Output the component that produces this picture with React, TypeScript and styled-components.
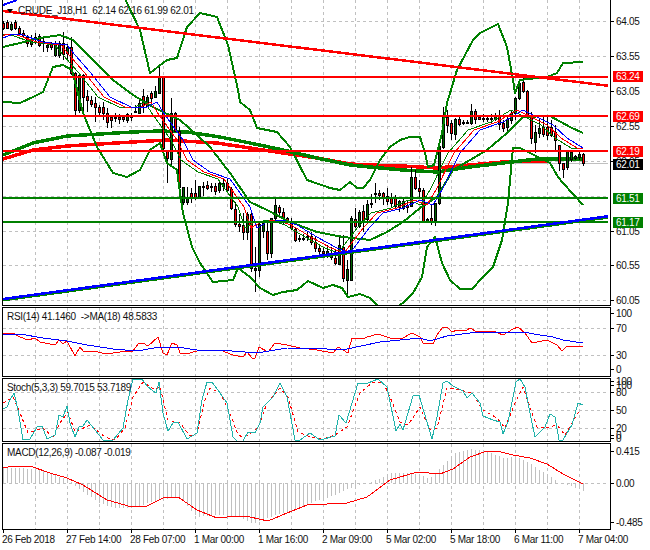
import React from 'react';
import styled, { createGlobalStyle } from 'styled-components';

type Pt = [number, number];
type Candle = [number, number, number, number, 'u' | 'd'];

const RED = '#ff0000';
const GREEN = '#008000';
const BLUE = '#0000ff';
const GRID = '#c0c0c0';
const BARS = 146;
const PLOT_W = 607;

// high, body top, body bottom, low, direction - all in page pixels
const CANDLES: Candle[] = [
  [21, 23, 28, 30, 'd'], [20, 22, 28, 29, 'd'], [22, 24, 29, 31, 'u'], [20, 22, 28, 30, 'd'],
  [26, 28, 33, 36, 'd'], [30, 33, 35, 38, 'd'], [35, 37, 43, 47, 'd'], [35, 39, 44, 47, 'u'],
  [33, 37, 38, 44, 'd'], [34, 36, 45, 47, 'd'], [38, 41, 43, 52, 'd'], [42, 45, 47, 52, 'u'],
  [42, 44, 47, 50, 'd'], [41, 43, 55, 57, 'u'], [41, 43, 55, 58, 'u'], [32, 43, 54, 60, 'd'],
  [44, 47, 53, 60, 'u'], [37, 47, 73, 75, 'd'], [72, 73, 110, 115, 'd'], [74, 75, 110, 113, 'u'],
  [74, 75, 97, 112, 'd'], [90, 96, 100, 112, 'd'], [96, 100, 104, 107, 'd'], [97, 103, 107, 122, 'd'],
  [105, 107, 112, 115, 'd'], [102, 107, 113, 120, 'd'], [108, 113, 122, 128, 'd'], [115, 117, 120, 128, 'd'],
  [113, 117, 118, 122, 'd'], [114, 117, 119, 124, 'd'], [115, 117, 119, 122, 'd'], [113, 114, 120, 123, 'u'],
  [113, 115, 117, 121, 'd'], [105, 111, 112, 113, 'u'], [100, 103, 113, 114, 'u'], [89, 96, 105, 113, 'd'],
  [95, 97, 106, 107, 'u'], [91, 93, 98, 107, 'd'], [86, 91, 97, 98, 'u'], [66, 77, 93, 94, 'u'],
  [76, 77, 148, 150, 'd'], [150, 150, 158, 183, 'd'], [98, 113, 159, 166, 'u'], [112, 113, 131, 132, 'd'],
  [127, 131, 187, 195, 'd'], [187, 187, 202, 205, 'u'], [187, 197, 202, 205, 'u'], [188, 193, 197, 203, 'd'],
  [180, 193, 197, 200, 'd'], [186, 186, 198, 199, 'u'], [182, 186, 187, 196, 'u'], [181, 185, 188, 190, 'd'],
  [183, 186, 187, 192, 'u'], [183, 186, 191, 195, 'd'], [180, 183, 190, 193, 'u'], [178, 183, 186, 191, 'u'],
  [178, 183, 190, 192, 'd'], [187, 189, 208, 210, 'd'], [202, 209, 224, 227, 'd'], [214, 224, 226, 232, 'd'],
  [213, 225, 232, 240, 'd'], [212, 214, 232, 240, 'u'], [211, 214, 268, 272, 'd'], [247, 268, 270, 292, 'u'],
  [223, 224, 270, 277, 'u'], [222, 223, 231, 238, 'u'], [223, 231, 253, 260, 'd'], [218, 218, 253, 258, 'u'],
  [197, 205, 218, 222, 'u'], [205, 207, 212, 218, 'd'], [208, 212, 218, 225, 'd'], [217, 218, 222, 223, 'd'],
  [218, 221, 228, 230, 'd'], [228, 229, 240, 242, 'd'], [235, 238, 239, 242, 'd'], [234, 238, 239, 241, 'u'],
  [232, 236, 237, 241, 'u'], [232, 236, 242, 245, 'd'], [236, 242, 248, 252, 'd'], [245, 248, 251, 255, 'd'],
  [248, 251, 253, 256, 'd'], [245, 251, 256, 258, 'u'], [247, 253, 257, 260, 'u'], [250, 258, 263, 265, 'd'],
  [236, 245, 264, 265, 'u'], [235, 247, 278, 282, 'd'], [260, 269, 280, 296, 'u'], [216, 218, 280, 281, 'u'],
  [208, 219, 226, 228, 'd'], [210, 212, 226, 228, 'u'], [205, 211, 220, 232, 'd'], [200, 204, 219, 222, 'u'],
  [194, 203, 204, 208, 'd'], [183, 193, 194, 203, 'u'], [190, 193, 195, 200, 'd'], [192, 193, 197, 205, 'd'],
  [188, 196, 201, 205, 'd'], [193, 198, 203, 207, 'd'], [195, 198, 206, 208, 'd'], [200, 201, 207, 212, 'u'],
  [198, 201, 208, 210, 'u'], [200, 205, 207, 213, 'd'], [167, 177, 206, 207, 'u'], [170, 177, 188, 190, 'd'],
  [180, 188, 191, 198, 'd'], [188, 190, 221, 223, 'd'], [218, 219, 221, 223, 'u'], [205, 218, 221, 225, 'd'],
  [203, 203, 220, 226, 'u'], [140, 146, 203, 205, 'u'], [107, 116, 147, 149, 'u'], [110, 117, 125, 133, 'd'],
  [120, 123, 133, 140, 'd'], [118, 119, 134, 140, 'u'], [117, 119, 124, 126, 'd'], [120, 122, 123, 125, 'u'],
  [120, 122, 123, 124, 'd'], [104, 111, 123, 125, 'u'], [109, 111, 119, 124, 'd'], [115, 117, 119, 120, 'd'],
  [114, 118, 119, 122, 'u'], [115, 118, 119, 122, 'd'], [114, 118, 119, 123, 'u'], [113, 116, 119, 121, 'u'],
  [110, 115, 124, 130, 'd'], [120, 123, 128, 132, 'd'], [115, 119, 127, 131, 'u'], [111, 113, 120, 124, 'u'],
  [97, 98, 113, 120, 'u'], [82, 83, 98, 100, 'u'], [76, 82, 91, 93, 'd'], [90, 91, 117, 119, 'd'],
  [112, 117, 138, 144, 'd'], [125, 132, 142, 153, 'u'], [118, 128, 133, 138, 'u'], [115, 127, 134, 137, 'd'],
  [117, 127, 135, 140, 'd'], [120, 127, 135, 137, 'd'], [125, 132, 140, 150, 'd'], [145, 145, 163, 171, 'd'],
  [163, 163, 169, 178, 'd'], [150, 151, 167, 170, 'u'], [150, 152, 159, 162, 'u'], [155, 156, 158, 160, 'u'],
  [152, 154, 157, 160, 'u'], [153, 154, 163, 166, 'd'],
];

const SLOW_RED: Pt[] = [[3, 159], [33, 150], [67, 146], [100, 144], [133, 142], [167, 140], [183, 141], [217, 143], [250, 148], [283, 153], [317, 158], [350, 164], [370, 165], [403, 166], [437, 168], [470, 165], [503, 162], [547, 161]];
const SLOW_GREEN: Pt[] = [[3, 155], [33, 143], [67, 136], [100, 134], [133, 132], [160, 131], [187, 132], [220, 137], [250, 143], [283, 150], [317, 158], [350, 165], [370, 167], [403, 170], [437, 172], [470, 167], [503, 163], [537, 159], [583, 159]];

const BB_UPPER: Pt[] = [[120, -10], [127, 3], [140, 30], [150, 73], [167, 60], [177, 58], [187, 27], [200, 13], [217, 17], [228, 45], [238, 90], [240, 102], [250, 110], [257, 128], [277, 132], [290, 147], [307, 180], [330, 188], [340, 190], [350, 182], [357, 188], [363, 188], [370, 180], [380, 160], [390, 147], [400, 140], [410, 137], [420, 137], [425, 153], [428, 167], [434, 165], [442, 133], [447, 103], [457, 70], [473, 40], [480, 33], [498, 24], [507, 47], [513, 80], [515, 93], [520, 80], [547, 77], [557, 73], [563, 63], [583, 62]];
const BB_MID: Pt[] = [[3, 47], [20, 43], [40, 38], [60, 35], [73, 40], [93, 60], [113, 80], [133, 95], [153, 107], [163, 112], [180, 120], [197, 135], [210, 147], [230, 173], [250, 202], [267, 210], [290, 222], [317, 232], [343, 237], [370, 240], [387, 232], [403, 222], [420, 208], [437, 197], [453, 170], [487, 150], [507, 133], [523, 117], [550, 116], [570, 127], [583, 133]];
const BB_LOWER: Pt[] = [[3, 102], [20, 103], [33, 97], [43, 92], [53, 67], [63, 65], [72, 70], [83, 113], [97, 147], [113, 173], [127, 177], [140, 170], [150, 150], [160, 143], [167, 163], [177, 170], [180, 193], [183, 213], [192, 247], [200, 263], [213, 282], [233, 280], [238, 268], [250, 277], [260, 288], [273, 295], [283, 292], [297, 290], [308, 281], [323, 288], [333, 285], [342, 288], [348, 297], [360, 294], [370, 298], [378, 306], [398, 306], [403, 303], [413, 293], [422, 277], [427, 247], [435, 237], [442, 263], [450, 280], [460, 289], [472, 289], [483, 277], [493, 267], [502, 240], [508, 203], [513, 148], [520, 148], [530, 153], [550, 163], [558, 177], [563, 183], [583, 205]];

const MA_BLUE: Pt[] = [[3, 38], [13, 34], [23, 35], [43, 42], [67, 45], [75, 55], [90, 72], [110, 97], [133, 108], [147, 107], [157, 102], [163, 112], [183, 140], [193, 160], [210, 172], [230, 179], [250, 207], [257, 228], [267, 222], [283, 220], [297, 225], [317, 237], [337, 248], [350, 253], [370, 227], [383, 213], [403, 208], [420, 200], [433, 205], [442, 190], [460, 153], [480, 130], [503, 122], [523, 110], [537, 117], [553, 125], [567, 138], [583, 148]];
const shifted = (pts: Pt[], dx: number, dy: number): Pt[] => [
  ...pts.map(([x, y]): Pt => [x - dx, y + dy]),
  [583, pts[pts.length - 1][1] + dy],
];

const RSI_LINE: Pt[] = [[3, 334], [13, 333], [20, 337], [28, 340], [35, 338], [40, 342], [55, 345], [59, 340], [63, 344], [67, 341], [75, 356], [80, 347], [83, 351], [93, 351], [107, 354], [120, 352], [133, 351], [138, 344], [143, 343], [148, 346], [158, 337], [163, 353], [167, 355], [172, 343], [177, 345], [180, 353], [190, 353], [200, 350], [220, 350], [233, 355], [243, 357], [247, 352], [252, 358], [255, 358], [259, 347], [268, 352], [275, 343], [287, 345], [300, 348], [317, 350], [333, 353], [338, 347], [348, 353], [352, 338], [363, 339], [367, 337], [378, 334], [390, 338], [403, 338], [412, 333], [420, 337], [423, 343], [433, 344], [437, 335], [442, 328], [447, 327], [452, 332], [457, 330], [467, 330], [470, 328], [477, 332], [493, 331], [503, 335], [513, 329], [518, 327], [525, 333], [532, 343], [537, 342], [547, 340], [557, 345], [562, 351], [567, 346], [580, 346], [583, 347]];
const RSI_MA: Pt[] = [[3, 334], [20, 334], [43, 338], [67, 341], [87, 345], [113, 349], [137, 351], [160, 347], [177, 347], [197, 350], [220, 350], [257, 353], [287, 348], [327, 349], [347, 349], [380, 342], [420, 338], [430, 341], [447, 336], [470, 333], [483, 332], [523, 332], [540, 335], [553, 337], [563, 340], [583, 343]];

const STOCH_MAIN: Pt[] = [[3, 409], [7, 407], [10, 400], [14, 393], [18, 410], [23, 440], [30, 439], [37, 427], [42, 426], [47, 439], [55, 435], [59, 415], [63, 417], [67, 406], [70, 423], [75, 437], [79, 427], [83, 426], [87, 420], [103, 440], [113, 440], [123, 428], [128, 400], [133, 379], [142, 379], [148, 387], [156, 393], [159, 382], [163, 413], [168, 431], [173, 423], [178, 422], [187, 439], [197, 433], [202, 400], [207, 382], [212, 382], [220, 393], [227, 403], [233, 437], [237, 441], [243, 441], [248, 432], [255, 433], [260, 423], [263, 407], [273, 397], [280, 383], [287, 397], [295, 440], [300, 440], [310, 433], [320, 440], [335, 436], [339, 415], [346, 423], [358, 383], [368, 383], [378, 379], [387, 387], [396, 431], [400, 424], [403, 430], [413, 396], [419, 395], [432, 439], [437, 417], [443, 383], [447, 381], [453, 386], [463, 391], [467, 398], [472, 393], [480, 403], [483, 416], [493, 420], [500, 422], [503, 434], [508, 422], [516, 382], [520, 379], [525, 387], [530, 413], [535, 437], [545, 427], [550, 414], [555, 417], [559, 440], [563, 440], [572, 425], [578, 403], [583, 405]];
const STOCH_SIGNAL: Pt[] = [[3, 403], [13, 397], [20, 413], [28, 433], [43, 428], [53, 437], [60, 423], [68, 412], [75, 432], [90, 425], [105, 437], [115, 440], [125, 428], [133, 397], [143, 382], [155, 390], [160, 387], [168, 420], [180, 423], [190, 436], [197, 433], [205, 400], [210, 388], [220, 393], [230, 413], [238, 435], [243, 437], [248, 435], [258, 428], [267, 403], [280, 388], [288, 397], [298, 432], [310, 437], [323, 439], [335, 435], [347, 427], [360, 393], [373, 382], [383, 382], [390, 397], [400, 422], [408, 425], [420, 407], [430, 430], [437, 428], [447, 388], [460, 390], [472, 393], [483, 410], [497, 418], [505, 428], [515, 403], [523, 387], [537, 427], [545, 428], [557, 425], [565, 435], [580, 410]];

const MACD_HIST: Pt[] = [[3, 468], [23, 468], [43, 471], [55, 475], [67, 479], [72, 482], [75, 486], [100, 503], [113, 508], [131, 508], [160, 500], [180, 497], [197, 517], [220, 515], [240, 517], [253, 524], [267, 518], [287, 512], [310, 503], [330, 497], [353, 487], [367, 483], [377, 480], [390, 473], [407, 473], [420, 475], [430, 479], [443, 465], [455, 453], [472, 449], [490, 452], [503, 458], [517, 457], [530, 463], [543, 472], [552, 477], [560, 483], [567, 485], [577, 488], [583, 491]];
const MACD_SIGNAL: Pt[] = [[3, 468], [13, 466], [30, 466], [50, 473], [67, 478], [83, 485], [107, 500], [132, 507], [147, 506], [163, 498], [178, 497], [197, 510], [217, 518], [237, 516], [250, 517], [268, 521], [287, 513], [307, 505], [347, 503], [367, 497], [390, 480], [417, 472], [440, 474], [453, 469], [470, 457], [487, 451], [497, 451], [513, 455], [530, 458], [547, 464], [563, 474], [583, 484]];

const TIME_LABELS = ['26 Feb 2018', '27 Feb 14:00', '28 Feb 07:00', '1 Mar 00:00', '1 Mar 16:00', '2 Mar 09:00', '5 Mar 02:00', '5 Mar 18:00', '6 Mar 11:00', '7 Mar 04:00'];

const toPoints = (pts: Pt[]) => pts.map(([x, y]) => `${x},${y}`).join(' ');

const interp = (pts: Pt[], x: number) => {
  for (let i = 1; i < pts.length; i++) {
    if (x <= pts[i][0]) {
      const [x0, y0] = pts[i - 1];
      const [x1, y1] = pts[i];
      return y0 + ((y1 - y0) * (x - x0)) / (x1 - x0);
    }
  }
  return pts[pts.length - 1][1];
};

const GlobalStyle = createGlobalStyle`
  html, body {
    margin: 0;
    padding: 0;
    width: 650px;
    height: 550px;
    overflow: hidden;
    background: #ffffff;
  }
`;

const Chart = styled.div`
  display: flex;
  flex-direction: column;
  gap: 1px;
  width: 650px;
  height: 550px;
  padding-left: 2px;
  box-sizing: border-box;
  font-family: 'Liberation Sans', Arial, sans-serif;
  font-size: 10px;
  letter-spacing: -0.3px;
  color: #111;
`;

const Pane = styled.section<{ $height: number }>`
  display: flex;
  height: ${(p) => p.$height}px;
`;

const Plot = styled.div<{ $open?: boolean }>`
  position: relative;
  width: ${PLOT_W}px;
  border: 1px solid #000;
  border-top-width: ${(p) => (p.$open ? 0 : 1)}px;
  overflow: hidden;
  svg {
    display: block;
  }
`;

const PaneLabel = styled.div`
  position: absolute;
  left: 4px;
  top: 3px;
  white-space: pre;
  line-height: 12px;
`;

const SymbolLabel = styled(PaneLabel)`
  left: 14px;
  top: 5px;
  display: flex;
  align-items: center;
  gap: 5px;
  &::before {
    content: '';
    width: 0;
    height: 0;
    margin-left: -10px;
    border-left: 3.5px solid transparent;
    border-right: 3.5px solid transparent;
    border-top: 4px solid #000;
  }
`;

const Axis = styled.div`
  position: relative;
  flex: 1;
`;

const AxisTick = styled.span`
  position: absolute;
  left: 5px;
  line-height: 12px;
  margin-top: -5px;
  &::before {
    content: '';
    position: absolute;
    left: -5px;
    top: 5px;
    width: 3px;
    height: 1px;
    background: #000;
  }
`;

const PriceTag = styled.span<{ $bg: string }>`
  position: absolute;
  left: 2px;
  width: 30px;
  height: 11px;
  margin-top: -5.5px;
  padding-left: 3px;
  box-sizing: border-box;
  line-height: 11px;
  color: #fff;
  background: ${(p) => p.$bg};
`;

const TimeAxis = styled.div`
  display: grid;
  grid-template-columns: repeat(10, 64px);
  margin-top: -1px;
`;

const TimeCell = styled.span`
  position: relative;
  padding-top: 4px;
  line-height: 12px;
  white-space: nowrap;
  &::before {
    content: '';
    position: absolute;
    left: 1px;
    top: 0;
    width: 1px;
    height: 3px;
    background: #000;
  }
`;

const Curve = styled.polyline<{ $color: string; $w: number; $dash?: string }>`
  fill: none;
  stroke: ${(p) => p.$color};
  stroke-width: ${(p) => p.$w}px;
  stroke-dasharray: ${(p) => p.$dash ?? 'none'};
  stroke-linejoin: round;
`;

const Rule = styled.line<{ $color: string; $w?: number; $dash?: string }>`
  stroke: ${(p) => p.$color};
  stroke-width: ${(p) => p.$w ?? 1}px;
  stroke-dasharray: ${(p) => p.$dash ?? 'none'};
`;

const Wick = styled.line`
  stroke: #000;
  stroke-width: 1px;
`;

const Body = styled.rect<{ $up: boolean }>`
  fill: ${(p) => (p.$up ? '#006400' : RED)};
  stroke: #000;
  stroke-width: 1px;
`;

const Grid = ({ top, height, rows }: { top: number; height: number; rows: number[] }) => (
  <g shapeRendering="crispEdges">
    {Array.from({ length: 19 }, (_, k) => 35.5 + 32 * k).map((x) => (
      <Rule key={x} x1={x} x2={x} y1={top} y2={top + height} $color={GRID} $dash="3 3" />
    ))}
    {rows.map((y) => (
      <Rule key={y} x1={3} x2={610} y1={y + 0.5} y2={y + 0.5} $color={GRID} $dash="3 3" />
    ))}
  </g>
);

const PaneSvg = ({ top, height, children }: { top: number; height: number; children: React.ReactNode }) => (
  <svg width={PLOT_W - 2} height={height} viewBox={`3 ${top} ${PLOT_W - 2} ${height}`}>
    {children}
  </svg>
);

const Candles = () => (
  <g shapeRendering="crispEdges">
    {CANDLES.map(([high, bodyTop, bodyBottom, low, dir], i) => {
      const x = 3.5 + 4 * i;
      return (
        <g key={i}>
          <Wick x1={x} x2={x} y1={high} y2={low} />
          <Body
            $up={dir === 'u'}
            x={x - 1}
            y={bodyTop + 0.5}
            width={2}
            height={Math.max(bodyBottom - bodyTop, 1)}
          />
        </g>
      );
    })}
  </g>
);

const MainPane = () => (
  <Pane $height={306}>
    <Plot $open>
      <PaneSvg top={0} height={305}>
        <Grid top={0} height={305} rows={[21, 56, 91, 126, 161, 196, 231, 265, 300]} />
        <Rule x1={3} x2={610} y1={163.5} y2={163.5} $color={GRID} shapeRendering="crispEdges" />
        <g shapeRendering="crispEdges">
          <Curve points={toPoints(SLOW_RED)} $color={RED} $w={3.5} />
          <Curve points={toPoints(SLOW_GREEN)} $color={GREEN} $w={3.5} />
        </g>
        <Candles />
        <g shapeRendering="crispEdges">
          <Curve points={toPoints(BB_UPPER)} $color={GREEN} $w={2} />
          <Curve points={toPoints(BB_MID)} $color={GREEN} $w={2} />
          <Curve points={toPoints(BB_LOWER)} $color={GREEN} $w={2} />
          <Curve points={toPoints(shifted(MA_BLUE, 12, 0))} $color={GREEN} $w={1} />
          <Curve points={toPoints(shifted(MA_BLUE, 6, 0))} $color={RED} $w={1} />
          <Curve points={toPoints(MA_BLUE)} $color={BLUE} $w={1} />
          {[77, 116, 151].map((y) => (
            <Rule key={y} x1={3} x2={610} y1={y} y2={y} $color={RED} $w={2} />
          ))}
          {[198, 222].map((y) => (
            <Rule key={y} x1={3} x2={610} y1={y} y2={y} $color={GREEN} $w={2} />
          ))}
          <Rule x1={3} x2={610} y1={11} y2={86} $color={RED} $w={2.5} />
          <Rule x1={3} x2={610} y1={300.5} y2={217.5} $color={GREEN} $w={2} />
          <Rule x1={3} x2={610} y1={299} y2={216} $color={BLUE} $w={2.5} />
          <Rule x1={3} x2={17} y1={5} y2={0} $color={BLUE} $w={2} />
        </g>
      </PaneSvg>
      <SymbolLabel>CRUDE_J18,H1  62.14 62.16 61.99 62.01</SymbolLabel>
    </Plot>
    <Axis>
      {[21, 56, 91, 126, 161, 231, 265, 300].map((y, i) => (
        <AxisTick key={y} style={{ top: y }}>
          {['64.05', '63.55', '63.05', '62.55', '62.05', '61.05', '60.55', '60.05'][i]}
        </AxisTick>
      ))}
      <PriceTag $bg={RED} style={{ top: 76.5 }}>63.24</PriceTag>
      <PriceTag $bg={RED} style={{ top: 116 }}>62.69</PriceTag>
      <PriceTag $bg={RED} style={{ top: 151 }}>62.19</PriceTag>
      <PriceTag $bg="#000" style={{ top: 164 }}>62.01</PriceTag>
      <PriceTag $bg={GREEN} style={{ top: 198 }}>61.51</PriceTag>
      <PriceTag $bg={GREEN} style={{ top: 222 }}>61.17</PriceTag>
    </Axis>
  </Pane>
);

const IndicatorAxis = ({ top, ticks }: { top: number; ticks: [string, number][] }) => (
  <Axis>
    {ticks.map(([label, y]) => (
      <AxisTick key={label + y} style={{ top: y - top }}>
        {label}
      </AxisTick>
    ))}
  </Axis>
);

export default function App() {
  return (
    <>
      <GlobalStyle />
      <Chart>
        <MainPane />

        <Pane $height={70}>
          <Plot>
            <PaneSvg top={308} height={68}>
              <Grid top={308} height={68} rows={[328, 355]} />
              <g shapeRendering="crispEdges">
                <Curve points={toPoints(RSI_LINE)} $color={RED} $w={1} />
                <Curve points={toPoints(RSI_MA)} $color={BLUE} $w={1} />
              </g>
            </PaneSvg>
            <PaneLabel>RSI(14) 41.1460  -&gt;MA(18) 48.5833</PaneLabel>
          </Plot>
          <IndicatorAxis top={307} ticks={[['100', 313], ['70', 328], ['30', 355], ['0', 369]]} />
        </Pane>

        <Pane $height={64}>
          <Plot>
            <PaneSvg top={379} height={62}>
              <Grid top={379} height={62} rows={[392, 410, 428]} />
              <g shapeRendering="crispEdges">
                <Curve points={toPoints(STOCH_SIGNAL)} $color={RED} $w={1} $dash="3 3" />
                <Curve points={toPoints(STOCH_MAIN)} $color="#20b2aa" $w={1} />
              </g>
            </PaneSvg>
            <PaneLabel>Stoch(5,3,3) 59.7015 53.7189</PaneLabel>
          </Plot>
          <IndicatorAxis
            top={378}
            ticks={[['100', 381], ['100', 385], ['80', 392], ['50', 410], ['20', 428], ['0', 435], ['0', 438]]}
          />
        </Pane>

        <Pane $height={87}>
          <Plot>
            <PaneSvg top={444} height={85}>
              <Grid top={444} height={85} rows={[483]} />
              <g shapeRendering="crispEdges">
                {Array.from({ length: BARS }, (_, i) => 3.5 + 4 * i).map((x) => (
                  <Rule key={x} x1={x} x2={x} y1={483} y2={interp(MACD_HIST, x)} $color={GRID} />
                ))}
                <Curve points={toPoints(MACD_SIGNAL)} $color={RED} $w={1} />
              </g>
            </PaneSvg>
            <PaneLabel>MACD(12,26,9) -0.087 -0.019</PaneLabel>
          </Plot>
          <IndicatorAxis top={443} ticks={[['0.415', 451], ['0.00', 483], ['-0.485', 522]]} />
        </Pane>

        <TimeAxis>
          {TIME_LABELS.map((label) => (
            <TimeCell key={label}>{label}</TimeCell>
          ))}
        </TimeAxis>
      </Chart>
    </>
  );
}
